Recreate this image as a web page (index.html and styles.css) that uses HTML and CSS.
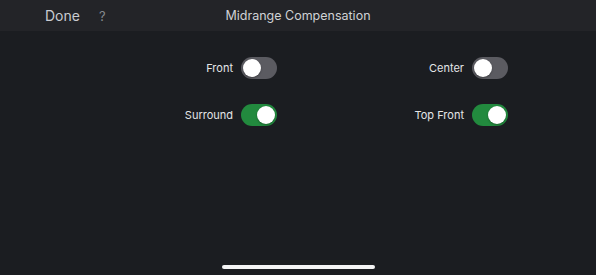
FILE: index.html
```html
<!DOCTYPE html>
<html lang="en">
<head>
  <meta charset="UTF-8">
  <meta name="viewport" content="width=device-width, initial-scale=1.0">
  <title>Midrange Compensation</title>
  <link rel="stylesheet" href="styles.css">
</head>
<body>
  <header class="nav">
    <div class="nav-left">
      <span class="done">Done</span>
      <span class="help">?</span>
    </div>
    <div class="nav-title">Midrange Compensation</div>
  </header>

  <main class="settings">
    <label class="item">
      <span class="label">Front</span>
      <span class="switch"><span class="knob"></span></span>
    </label>
    <label class="item">
      <span class="label">Center</span>
      <span class="switch"><span class="knob"></span></span>
    </label>
    <label class="item">
      <span class="label">Surround</span>
      <span class="switch on"><span class="knob"></span></span>
    </label>
    <label class="item">
      <span class="label">Top Front</span>
      <span class="switch on"><span class="knob"></span></span>
    </label>
  </main>

  <div class="home-bar"></div>
</body>
</html>
```

FILE: styles.css
```css
html, body {
  margin: 0;
  height: 100%;
}
body {
  background-color: #1b1d21;
  font-family: Inter, "Noto Sans", sans-serif;
  color: #e6e6e8;
  display: flex;
  flex-direction: column;
  overflow: hidden;
}
.nav {
  height: 31px;
  background-color: #232428;
  position: relative;
  display: flex;
  align-items: center;
}
.nav-left {
  display: flex;
  align-items: center;
  gap: 19px;
  padding-left: 45px;
}
.done {
  font-size: 14px;
  color: #c9ccd1;
}
.help {
  font-size: 13px;
  color: #85888d;
}
.nav-title {
  position: absolute;
  left: 0;
  right: 0;
  top: 0;
  line-height: 31px;
  text-align: center;
  font-size: 12.5px;
  color: #d0d2d5;
  pointer-events: none;
}
.settings {
  display: grid;
  grid-template-columns: 231px 231px;
  row-gap: 25px;
  padding: 26px 0 0 46px;
}
.item {
  display: flex;
  justify-content: flex-end;
  align-items: center;
  gap: 8px;
  height: 22px;
}
.label {
  font-size: 11px;
  color: #e4e5e7;
}
.switch {
  width: 36px;
  height: 22px;
  border-radius: 11px;
  background-color: #5b5b61;
  position: relative;
  flex: none;
}
.switch.on {
  background-color: #228a3e;
}
.knob {
  position: absolute;
  top: 2px;
  left: 2px;
  width: 18px;
  height: 18px;
  border-radius: 50%;
  background-color: #ffffff;
  box-shadow: 0 1px 2px rgba(0,0,0,0.3);
}
.switch.on .knob {
  left: 16px;
}
.home-bar {
  margin: auto auto 6px;
  width: 153px;
  height: 4px;
  border-radius: 2px;
  background-color: #f4f4f5;
}
```
